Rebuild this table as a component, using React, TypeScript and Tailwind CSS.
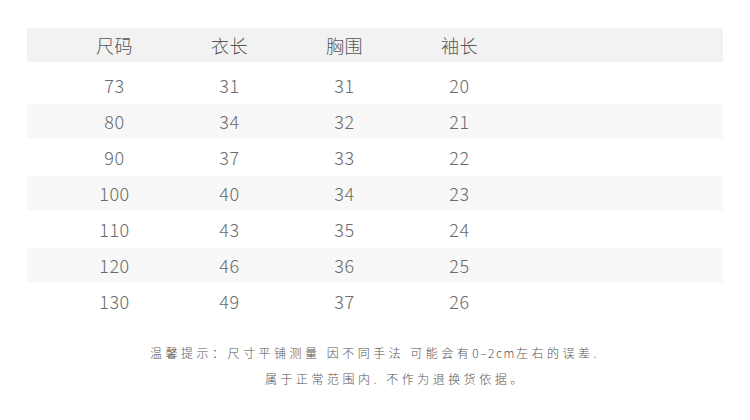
import React from 'react';

const HEADERS = ['尺码', '衣长', '胸围', '袖长'];

const ROWS: number[][] = [
  [73, 31, 31, 20],
  [80, 34, 32, 21],
  [90, 37, 33, 22],
  [100, 40, 34, 23],
  [110, 43, 35, 24],
  [120, 46, 36, 25],
  [130, 49, 37, 26],
];

const Row: React.FC<{ cells: (string | number)[]; striped: boolean; header?: boolean }> = ({ cells, striped, header }) => (
  <div
    className={`flex h-[34px] items-center pl-[30px] ${
      header ? 'bg-[#f2f2f2] text-[#555555]' : striped ? 'bg-[#f8f8f8] text-[#6a6a6a]' : 'text-[#6a6a6a]'
    }`}
  >
    {cells.map((c, i) => (
      <div key={i} className="w-[115px] text-center text-[18px] font-light leading-none tracking-[0.5px]">
        {c}
      </div>
    ))}
  </div>
);

export default function App() {
  return (
    <div
      className="h-[420px] w-[750px] bg-white pt-[28px]"
      style={{ fontFamily: '"Noto Sans CJK SC", "Noto Sans", sans-serif' }}
    >
      <div className="mx-[27px]">
        <Row cells={HEADERS} striped={false} header />
        <div className="mt-[6px] flex flex-col gap-[2px]">
          {ROWS.map((r, i) => (
            <Row key={r[0]} cells={r} striped={i % 2 === 1} />
          ))}
        </div>
      </div>
      <div className="mt-[26px] flex flex-col items-start gap-[8px] whitespace-nowrap text-[12px] font-light leading-[18px] tracking-[3.5px] text-[#555555]">
        <p className="ml-[150px]">
          温馨提示：尺寸平铺测量 因不同手法 可能会有<span className="tracking-[1.5px]">0–2cm</span>左右的误差.
        </p>
        <p className="ml-[265px]">属于正常范围内. 不作为退换货依据。</p>
      </div>
    </div>
  );
}
